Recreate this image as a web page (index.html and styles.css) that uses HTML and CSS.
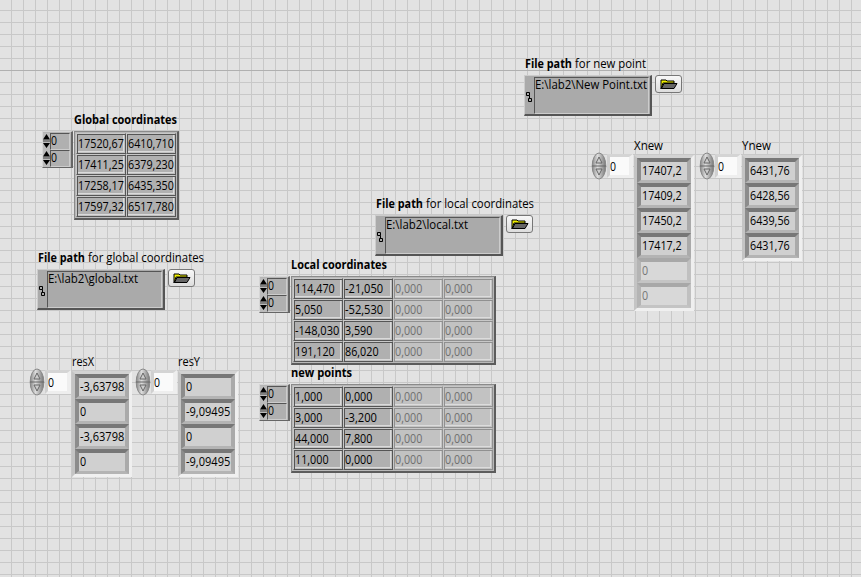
FILE: index.html
```html
<!DOCTYPE html>
<html lang="en"><head><meta charset="utf-8"><title>Coordinates</title><link rel="stylesheet" href="styles.css"></head>
<body><main class="panel" id="panel"></main><script src="panel.js"></script></body></html>
```
FILE: styles.css
```css
* { box-sizing: border-box; }
body { margin: 0; font: 13px/16px "Open Sans", "Noto Sans", sans-serif; color: #000; }
.panel { position: relative; width: 861px; height: 577px; overflow: hidden; background-color: #e2e2e2;
  background-image: linear-gradient(#b0b0b0, #b0b0b0), linear-gradient(90deg, #c8c8c8 1px, transparent 1px), linear-gradient(#c8c8c8 1px, transparent 1px);
  background-size: 100% 1px, 12px 12px, 12px 12px; background-position: 0 70px, 11px 0, 0 10px; background-repeat: no-repeat, repeat, repeat; }
.item { position: absolute; }
.t { display: block; white-space: pre; flex: none; }
.t text { font: 13px "Open Sans", "Noto Sans", sans-serif; }
.label { display: flex; }
.label .b text { font-weight: 700; }
.matrix { display: grid; width: max-content; padding: 1px 1px 1px 1px; background: #b8b8b8; border: solid #666; border-width: 1px 2px 2px 1px; border-color: #8a8a8a #5c5c5c #5c5c5c #8a8a8a; }
.cell { width: 50px; height: 21px; padding: 1px 0 0 2px; background: #b0b0b0; border: 1px solid; border-color: #c8c8c8 #555 #555 #c8c8c8; box-shadow: inset 1px 1px #555, inset -1px -1px #c0c0c0, inset -2px -2px #dadada; }
.cell.off { background: #c2c2c2; border-color: #c8c8c8 #909090 #909090 #c8c8c8; box-shadow: inset 1px 1px #909090, inset -1px -1px #c4c4c4, inset -2px -2px #dcdcdc; }
.cell .t { margin-left: -1px; }
.index { width: 31px; height: 37px; padding: 1px 1px 1px 0; background: #b5b5b5; border: 1px solid; border-right-width: 2px; border-color: #d5d5d5 #666 #666 #d5d5d5; }
.index .row { display: flex; height: 17px; }
.index .num { width: 21px; border: 1px solid; border-color: #555 #ccc #ccc #555; background: #b0b0b0; }
.index .num .t { margin: -2px 0 0 0; }
.path { display: flex; width: 128px; height: 41px; background: #aaa; border: 1px solid; border-width: 1px 2px 2px 1px; border-color: #ccc #555 #555 #ccc; }
.path .glyph { width: 9px; padding-top: 14px; }
.path .field { width: 115px; height: 37px; margin-top: 1px; border: 1px solid; border-color: #555 #ccc #ccc #555; }
.path .field .t { margin-top: -2px; }
.browse { width: 27px; height: 18px; border: 1px solid #777; border-radius: 3px; background: linear-gradient(#f8f8f8, #ddd); }
.stack { width: 60px; background: #b0b0b0; border: solid; border-width: 3px; border-color: #d2d2d2 #efefef #f0f0f0 #c4c4c4; }
.slot { height: 25px; padding: 0 0 0 1px; overflow: hidden; background: #d0d0d0; border: solid; border-width: 4px 4px 3px 4px; border-color: #777 #aaa #b4b4b4 #8c8c8c; }
.slot.off { border-color: #a8a8a8 #c0c0c0 #c4c4c4 #b4b4b4; background: #d8d8d8; }
.spin { display: flex; }
.spin .zero { width: 26px; height: 24px; margin-top: 2px; background: #fafafa; border: solid; border-width: 3px 4px 3px 3px; border-color: #d4d4d4 #eee #eee #d0d0d0; }
.spin .zero .t { margin-top: 1px; }
```
FILE: panel.js
```js
const panel = document.getElementById('panel');
const text = (s, w, fill = '#000', cls = '') => `<svg class="t ${cls}" width="${w}" height="17" overflow="visible"><text x="0" y="13" fill="${fill}" textLength="${w}" lengthAdjust="spacingAndGlyphs">${s}</text></svg>`;
const put = (x, y, html, cls = '') => panel.insertAdjacentHTML('beforeend', `<div class="item ${cls}" style="left:${x}px;top:${y}px">${html}</div>`);
const pathLabel = (x, y, rest, w) => { put(x, y, text('File path', 47, '#000', 'b') + text(rest, w), 'label'); panel.lastElementChild.style.gap = '3px'; };
const digits = s => [...s].reduce((n, c) => n + (c === ',' ? 2.8 : c === '-' ? 4.6 : 6.15), 0);
const arrows = `<svg width="7" height="17"><rect width="7" height="17" fill="#bbb"/><path d="M3.5 1L7 6.5H0zM0 10h7l-3.5 5z"/><path d="M0 8h7" stroke="#444"/></svg>`;
function matrix(x, y, cols, data) {
  put(x, y, data.flat().map(v => `<div class="cell${v === '' ? ' off' : ''}">${text(v || '0,000', digits(v || '0,000'), v ? '#000' : '#707070')}</div>`).join(''), 'matrix');
  panel.lastElementChild.style.gridTemplateColumns = `repeat(${cols}, 50px)`;
}
function index(x, y) { put(x, y, `<div class="row">${arrows}<div class="num">${text('0', 6)}</div></div>`.repeat(2), 'index'); }
function path(x, y, value, w) {
  put(x, y, `<div class="glyph"><svg width="8" height="12" fill="none" stroke="#000"><path d="M1.5 1.5h3v3h-3zM3.5 7.5h3v3h-3zM4.5 4.5v3"/></svg></div><div class="field">${text(value, w)}</div>`, 'path');
  put(x + 131, y, `<svg width="25" height="16"><path d="M5 13V4h5l1 1h7v2H7z" fill="#ee0" stroke="#000"/><path d="M5.5 12.5L8 7.5h13l-3 5z" fill="#666" stroke="#000"/></svg>`, 'browse');
}
function stack(x, y, values) { put(x, y, values.map(v => `<div class="slot${v === '' ? ' off' : ''}">${text(v || '0', digits(v || '0'), v ? '#000' : '#777')}</div>`).join(''), 'stack'); }
function spin(x, y) {
  put(x, y, `<svg width="16" height="28"><defs><linearGradient id="knob"><stop offset="0" stop-color="#888"/><stop offset=".4" stop-color="#ddd"/><stop offset="1" stop-color="#777"/></linearGradient></defs><ellipse cx="8" cy="14" rx="6.8" ry="13" fill="url(#knob)" stroke="#888"/><path d="M1 14h14" stroke="#666"/><path d="M5 11l3-6 3 6zM5 17h6l-3 6z" fill="#ccc" stroke="#666"/></svg><div class="zero">${text('0', 6)}</div>`, 'spin');
}
put(74, 111, text('Global coordinates', 103, '#000', 'b'), 'label');
index(42, 131);
matrix(74, 131, 2, [['17520,67','6410,710'],['17411,25','6379,230'],['17258,17','6435,350'],['17597,32','6517,780']]);
pathLabel(525, 55, 'for new point', 71);
path(524, 75, 'E:\\lab2\\New Point.txt', 112);
pathLabel(376, 195, 'for local coordinates', 108);
path(375, 215, 'E:\\lab2\\local.txt', 82);
pathLabel(38, 249, 'for global coordinates', 116);
path(37, 269, 'E:\\lab2\\global.txt', 90);
put(291, 256, text('Local coordinates', 96, '#000', 'b'), 'label');
index(259, 276);
matrix(291, 276, 4, [['114,470','-21,050','',''],['5,050','-52,530','',''],['-148,030','3,590','',''],['191,120','86,020','','']]);
put(291, 364, text('new points', 61, '#000', 'b'), 'label');
index(259, 384);
matrix(291, 384, 4, [['1,000','0,000','',''],['3,000','-3,200','',''],['44,000','7,800','',''],['11,000','0,000','','']]);
put(634, 137, text('Xnew', 29)); put(742, 137, text('Ynew', 29));
put(72, 353, text('resX', 22)); put(178, 353, text('resY', 22));
spin(591, 152); stack(634, 155, ['17407,2','17409,2','17450,2','17417,2','','']);
spin(699, 152); stack(742, 155, ['6431,76','6428,56','6439,56','6431,76']);
spin(29, 368); stack(72, 371, ['-3,63798','0','-3,63798','0']);
spin(135, 368); stack(178, 371, ['0','-9,09495','0','-9,09495']);
```
